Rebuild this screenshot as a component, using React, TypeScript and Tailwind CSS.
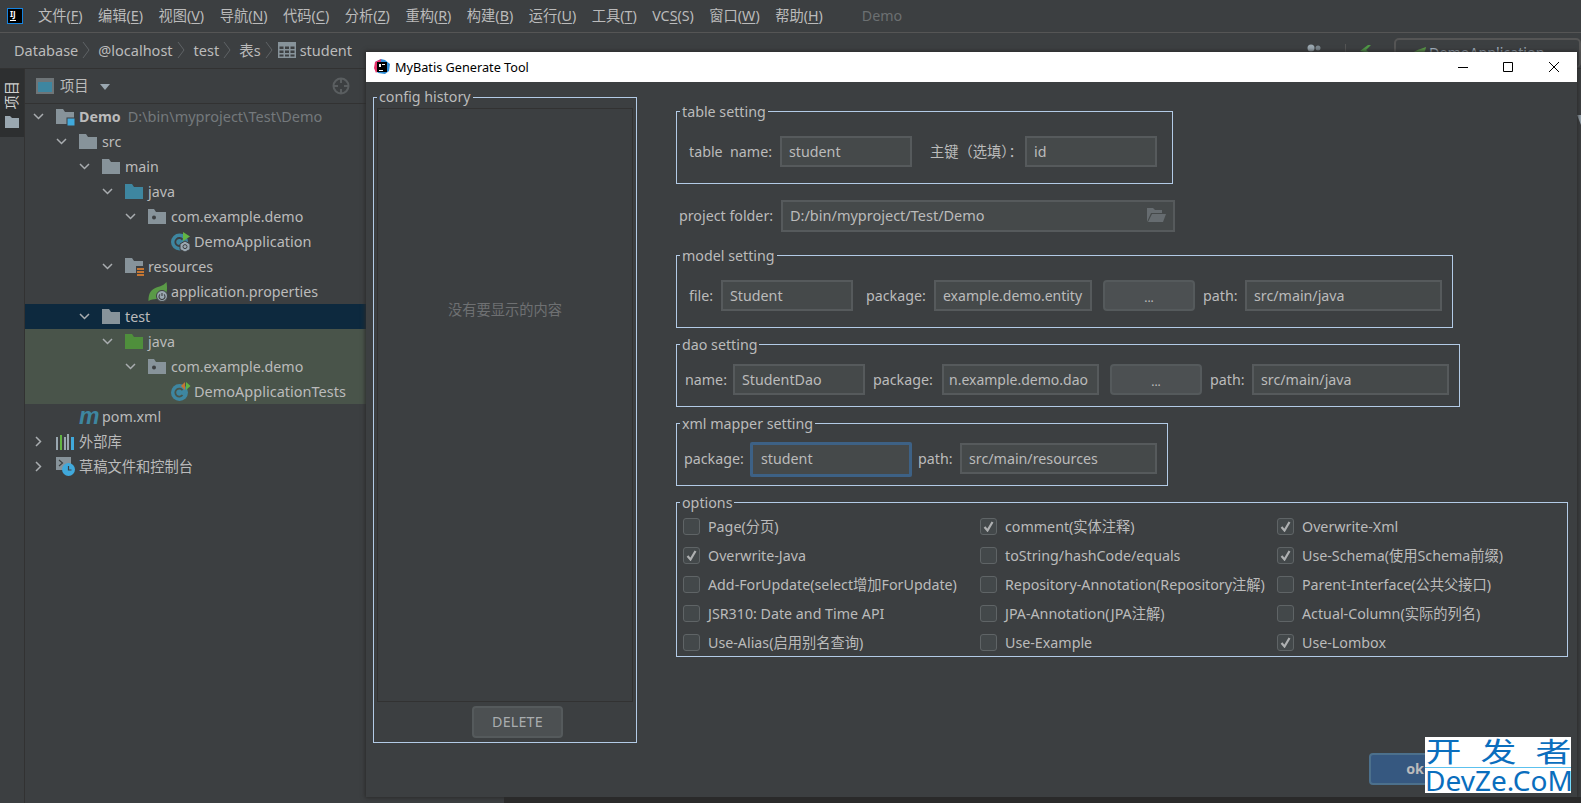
import type { ReactNode } from "react";

const Chevron = () => (
  <svg width="8" height="18" viewBox="0 0 8 18" fill="none" stroke="#5f6366" className="shrink-0">
    <path d="M1 1l6 8-6 8" />
  </svg>
);

const Arrow = ({ open }: { open: boolean }) => (
  <svg width="11" height="11" viewBox="0 0 11 11" fill="none" stroke="#a9adb0" strokeWidth="1.5">
    {open ? <path d="M1 3l4.5 4.5L10 3" /> : <path d="M3 1l4.5 4.5L3 10" />}
  </svg>
);

const Folder = ({ color = "#87939a" }: { color?: string }) => (
  <svg width="18" height="15" viewBox="0 0 18 15" fill={color}>
    <path d="M0 0h7l2 3h9v12H0z" />
  </svg>
);

const ModuleFolder = () => (
  <svg width="20" height="18" viewBox="0 0 20 18">
    <path d="M0 1h7l2 3h9v12H0z" fill="#87939a" />
    <rect x="11" y="10" width="8" height="8" fill="#40a9dc" stroke="#3c3f41" />
  </svg>
);

const PackageFolder = () => (
  <svg width="18" height="15" viewBox="0 0 18 15">
    <path d="M0 0h6l2 3h10v12H0z" fill="#87939a" />
    <circle cx="6" cy="8.5" r="2" fill="#3c3f41" />
  </svg>
);

const ResourcesFolder = () => (
  <svg width="20" height="18" viewBox="0 0 20 18">
    <path d="M0 0h7l2 3h9v12H0z" fill="#87939a" />
    <rect x="11" y="8" width="9" height="10" fill="#3c3f41" />
    <path d="M12 10h7v2h-7zM12 13h7v2h-7zM12 16h7v2h-7z" fill="#c57633" />
  </svg>
);

const MainClass = () => (
  <svg width="20" height="20" viewBox="0 0 20 20">
    <circle cx="8.5" cy="10" r="8.5" fill="#3e86a0" />
    <path d="M11.5 7.6a4 4 0 1 0 0 4.8" fill="none" stroke="#3c3f41" strokeWidth="1.8" />
    <path d="M12 0l7 4.5-7 4.5z" fill="#62b543" />
    <path d="M14 9l5 3v5.500l-5 2.500-5-2.500V12z" fill="#9aa7b0" stroke="#3c3f41" />
    <circle cx="14" cy="14.6" r="2" fill="none" stroke="#3c3f41" />
  </svg>
);

const TestClass = () => (
  <svg width="20" height="20" viewBox="0 0 20 20">
    <circle cx="8.5" cy="10.5" r="8.5" fill="#3e86a0" />
    <path d="M11.5 8.2a4 4 0 1 0 0 4.8" fill="none" stroke="#49544a" strokeWidth="1.8" />
    <path d="M14 0v8l-4-4z" fill="#c57633" />
    <path d="M15 0l4.500 4-4.500 4z" fill="#62b543" />
  </svg>
);

const SpringLeaf = () => (
  <svg width="21" height="20" viewBox="0 0 20 20">
    <path d="M0 19c0-3 0-9 5-12 5-3 9-2 13-7 1 6 1 12-3 15-4 3-10 1-15 4z" fill="#5a9a47" />
    <circle cx="13.500" cy="14" r="5.500" fill="#9aa7b0" stroke="#3c3f41" />
    <path d="M13.500 11v3M11.500 12.400a3 3 0 1 0 4 0" fill="none" stroke="#3c3f41" strokeWidth="1.100" />
  </svg>
);

const Libraries = () => (
  <svg width="18" height="16" viewBox="0 0 18 16">
    <path d="M0 3h2v13H0zM8 3h2v13H8z" fill="#9aa7b0" />
    <path d="M4 1h2v15H4z" fill="#62b543" />
    <path d="M11 0h2v16h-2z" fill="#9aa7b0" />
    <path d="M15 3h3v13h-3z" fill="#40a9dc" />
  </svg>
);

const Scratches = () => (
  <svg width="19" height="19" viewBox="0 0 19 19">
    <path d="M0 0h15v13H0z" fill="#87939a" />
    <path d="M3 3l3.500 3L3 9" fill="none" stroke="#3c3f41" strokeWidth="1.200" />
    <circle cx="12.500" cy="12.500" r="6.500" fill="#40a9dc" />
    <path d="M12.500 9v4h3" fill="none" stroke="#3c3f41" strokeWidth="1.200" />
  </svg>
);

const TableIcon = () => (
  <svg width="18" height="16" viewBox="0 0 18 16" className="shrink-0">
    <path d="M0 0h18v16H0z" fill="#87939a" />
    <path
      d="M1.500 4.500h4v2.500h-4zM7 4.500h4v2.500H7zM12.500 4.500h4v2.500h-4zM1.500 8.500h4V11h-4zM7 8.500h4V11H7zM12.500 8.500h4V11h-4zM1.500 12.500h4v2h-4zM7 12.500h4v2H7zM12.500 12.500h4v2h-4z"
      fill="#3c3f41"
    />
  </svg>
);

const menus: [string, string][] = [
  ["文件", "F"],
  ["编辑", "E"],
  ["视图", "V"],
  ["导航", "N"],
  ["代码", "C"],
  ["分析", "Z"],
  ["重构", "R"],
  ["构建", "B"],
  ["运行", "U"],
  ["工具", "T"],
];

const MenuBar = () => (
  <div className="flex items-center h-[33px] border-b border-[#555555] shrink-0">
    <div className="ml-[7px] w-[16px] h-[16px] border border-[#1583e0] bg-black flex flex-col items-start pl-[2px] pt-px">
      <span className="text-[8px] leading-[8px] font-bold text-white">IJ</span>
      <span className="w-[6px] h-px bg-white mt-[2px]" />
    </div>
    <div className="flex items-center gap-[15.5px] ml-[15px]">
      {menus.map(([name, key]) => (
        <span key={key}>
          {name}(<span className="underline underline-offset-2">{key}</span>)
        </span>
      ))}
      <span>
        VC<span className="underline underline-offset-2">S</span>(S)
      </span>
      <span>
        窗口(<span className="underline underline-offset-2">W</span>)
      </span>
      <span>
        帮助(<span className="underline underline-offset-2">H</span>)
      </span>
    </div>
    <span className="ml-[39px] text-[#6c7072]">Demo</span>
  </div>
);

const BreadcrumbBar = () => (
  <div className="flex items-center h-[36px] border-b border-[#323232] shrink-0">
    <div className="flex items-center pl-[14px] pb-[2px] gap-[4px] text-[14.5px]">
      <span>Database</span>
      <Chevron />
      <span className="ml-[4px]">@localhost</span>
      <Chevron />
      <span className="ml-[5px]">test</span>
      <Chevron />
      <span className="ml-[4px]">表s</span>
      <Chevron />
      <span className="flex ml-[1px]">
        <TableIcon />
      </span>
      <span>student</span>
    </div>
    <div className="ml-auto flex items-center self-stretch pt-[4px]">
      <svg width="16" height="14" viewBox="0 0 16 14" className="mr-[7px] mb-[4px]">
        <circle cx="5" cy="4" r="3.500" fill="#9aa7b0" />
        <path d="M0 14c0-4 2-5 5-5s5 1 5 5z" fill="#9aa7b0" />
        <circle cx="12" cy="4" r="2.500" fill="#7a858c" />
      </svg>
      <span className="w-[6px] h-px bg-[#9aa7b0] mr-[10px] mt-[16px]" />
      <span className="w-px h-[18px] bg-[#555555] mr-[14px]" />
      <svg width="14" height="12" viewBox="0 0 14 12" className="mr-[20px] mb-[4px]">
        <path d="M0 6l8-6h3L6 5l8 6h-4L4 7z" fill="#4f9a45" />
      </svg>
      <div className="flex items-center gap-[3px] w-[187px] h-[30px] mt-[1px] border-2 border-[#555555] rounded-[5px] pl-[12px]">
        <svg width="18" height="12" viewBox="0 0 18 12">
          <path d="M0 12c0-5 6-8 18-12-1 6-4 10-9 12z" fill="#5a9a47" />
        </svg>
        <span className="text-[#a9b7c6]">DemoApplication</span>
      </div>
    </div>
  </div>
);

type NodeRow = {
  depth: number;
  arrow?: "open" | "closed";
  icon: ReactNode;
  label: ReactNode;
  bg?: string;
};

const rows: NodeRow[] = [
  {
    depth: 0,
    arrow: "open",
    icon: <ModuleFolder />,
    label: (
      <>
        <b className="font-bold">Demo</b>
        <span className="ml-[7px] text-[#74797c] text-[14.5px]">D:\bin\myproject\Test\Demo</span>
      </>
    ),
  },
  { depth: 1, arrow: "open", icon: <Folder />, label: "src" },
  { depth: 2, arrow: "open", icon: <Folder />, label: "main" },
  { depth: 3, arrow: "open", icon: <Folder color="#3e86a0" />, label: "java" },
  { depth: 4, arrow: "open", icon: <PackageFolder />, label: "com.example.demo" },
  { depth: 5, icon: <MainClass />, label: <span className="text-[14.5px]">DemoApplication</span> },
  { depth: 3, arrow: "open", icon: <ResourcesFolder />, label: "resources" },
  { depth: 4, icon: <SpringLeaf />, label: "application.properties" },
  { depth: 2, arrow: "open", icon: <Folder />, label: "test", bg: "bg-[#0d293e]" },
  { depth: 3, arrow: "open", icon: <Folder color="#4f8f3c" />, label: "java", bg: "bg-[#49544a]" },
  { depth: 4, arrow: "open", icon: <PackageFolder />, label: "com.example.demo", bg: "bg-[#49544a]" },
  { depth: 5, icon: <TestClass />, label: <span className="text-[14.5px]">DemoApplicationTests</span>, bg: "bg-[#49544a]" },
  {
    depth: 1,
    icon: <span className="text-[23px] leading-none font-bold italic text-[#3e86a0] font-['Liberation_Sans',sans-serif]">m</span>,
    label: "pom.xml",
  },
  { depth: 0, arrow: "closed", icon: <Libraries />, label: "外部库" },
  { depth: 0, arrow: "closed", icon: <Scratches />, label: "草稿文件和控制台" },
];

const Sidebar = () => (
  <div className="w-[479px] shrink-0">
    <div className="flex items-center h-[35px] border-b border-[#323232] pl-[11px]">
      <svg width="18" height="16" viewBox="0 0 18 16" className="mr-[6px]">
        <path d="M0 0h18v16H0z" fill="#6e7578" />
        <path d="M2 4h14v10H2z" fill="#3e86a0" />
      </svg>
      <span>项目</span>
      <svg width="10" height="6" viewBox="0 0 10 6" className="ml-[11px] mt-px">
        <path d="M0 0h10L5 6z" fill="#9aa7b0" />
      </svg>
      <svg width="18" height="18" viewBox="0 0 18 18" className="ml-auto mr-[154px]" fill="none" stroke="#5a5e60" strokeWidth="2">
        <circle cx="9" cy="9" r="7.500" />
        <path d="M9 1v5M9 12v5M1 9h5M12 9h5" />
      </svg>
    </div>
    {rows.map((row, i) => (
      <div
        key={i}
        className={`flex items-center h-[25px] whitespace-nowrap ${row.bg ?? ""}`}
        style={{ paddingLeft: 8 + 23 * row.depth }}
      >
        <span className="w-[23px] flex justify-start shrink-0">
          {row.arrow && <Arrow open={row.arrow === "open"} />}
        </span>
        <span className="w-[23px] flex items-center shrink-0">{row.icon}</span>
        <span>{row.label}</span>
      </div>
    ))}
  </div>
);

const Legend = ({ className = "-top-[10px]", children }: { className?: string; children: ReactNode }) => (
  <span className={`absolute left-[3px] px-[2px] leading-[20px] bg-[#3c3f41] ${className}`}>{children}</span>
);

const TextBox = ({ className, children }: { className: string; children: ReactNode }) => (
  <div className={`flex items-center justify-between h-[31px] shrink-0 overflow-hidden whitespace-nowrap pl-[7px] pr-[7px] bg-[#45494a] border-2 border-[#565a5c] ${className}`}>
    {children}
  </div>
);

const Btn = ({ className, children }: { className: string; children: ReactNode }) => (
  <div className={`flex items-center justify-center shrink-0 rounded-[4px] bg-[#4c5052] border-2 border-[#555a5c] ${className}`}>
    {children}
  </div>
);

const CheckBox = ({ label, checked }: { label: string; checked?: boolean }) => (
  <div className="flex items-center gap-[8px] h-[17px] whitespace-nowrap">
    <span className="flex items-center justify-center w-[17px] h-[17px] shrink-0 rounded-[3px] bg-[#43484a] border border-[#5f6466]">
      {checked && (
        <svg width="11" height="11" viewBox="0 0 11 11" fill="none" stroke="#aeb0b1" strokeWidth="2.2">
          <path d="M1.500 6l3 3.500L9.500 1" />
        </svg>
      )}
    </span>
    <span>{label}</span>
  </div>
);

const options: [string, boolean][] = [
  ["Page(分页)", false],
  ["comment(实体注释)", true],
  ["Overwrite-Xml", true],
  ["Overwrite-Java", true],
  ["toString/hashCode/equals", false],
  ["Use-Schema(使用Schema前缀)", true],
  ["Add-ForUpdate(select增加ForUpdate)", false],
  ["Repository-Annotation(Repository注解)", false],
  ["Parent-Interface(公共父接口)", false],
  ["JSR310: Date and Time API", false],
  ["JPA-Annotation(JPA注解)", false],
  ["Actual-Column(实际的列名)", false],
  ["Use-Alias(启用别名查询)", false],
  ["Use-Example", false],
  ["Use-Lombox", true],
];

const groupBorder = "relative shrink-0 border border-[#b3cbe6]";

const Settings = () => (
  <div className="flex flex-col ml-[39px] mt-[29px]">
    <div className={`${groupBorder} w-[497px] h-[73px] flex items-start pt-[24px] pl-[12px]`}>
      <Legend>table setting</Legend>
      <span className="w-[91px] h-[31px] leading-[31px] whitespace-pre">table  name:</span>
      <TextBox className="w-[132px]">student</TextBox>
      <span className="ml-[18px] w-[95px] h-[31px] leading-[31px] whitespace-nowrap">主键（选填）：</span>
      <TextBox className="w-[132px]">id</TextBox>
    </div>

    <div className="flex items-center mt-[16px] ml-[3px]">
      <span className="w-[102px]">project folder:</span>
      <TextBox className="w-[394px] !h-[32px] pb-[2px] text-[14.5px]">
        D:/bin/myproject/Test/Demo
        <svg width="19" height="14" viewBox="0 0 19 14" className="shrink-0">
          <path d="M0 14V0h6l2 2h7v3H4z" fill="#666c70" />
          <path d="M5 6h14l-3 8H1z" fill="#666c70" />
        </svg>
      </TextBox>
    </div>

    <div className={`${groupBorder} w-[777px] h-[73px] mt-[23px] flex items-start pt-[24px] pl-[12px]`}>
      <Legend>model setting</Legend>
      <span className="w-[32px] leading-[31px]">file:</span>
      <TextBox className="w-[132px]">Student</TextBox>
      <span className="ml-[13px] w-[68px] leading-[31px]">package:</span>
      <TextBox className="w-[158px] text-[14px]">example.demo.entity</TextBox>
      <Btn className="ml-[11px] w-[92px] h-[31px] text-[12px] pt-[5px]">...</Btn>
      <span className="ml-[8px] w-[42px] leading-[31px]">path:</span>
      <TextBox className="w-[197px]">src/main/java</TextBox>
    </div>

    <div className={`${groupBorder} w-[784px] h-[63px] mt-[16px] flex items-start pt-[19px] pl-[8px]`}>
      <Legend>dao setting</Legend>
      <span className="w-[48px] leading-[31px]">name:</span>
      <TextBox className="w-[132px]">StudentDao</TextBox>
      <span className="ml-[8px] w-[69px] leading-[31px]">package:</span>
      <TextBox className="w-[157px] !pl-[5px] text-[14px]">n.example.demo.dao</TextBox>
      <Btn className="ml-[11px] w-[92px] h-[31px] text-[12px] pt-[5px]">...</Btn>
      <span className="ml-[8px] w-[42px] leading-[31px]">path:</span>
      <TextBox className="w-[197px]">src/main/java</TextBox>
    </div>

    <div className={`${groupBorder} w-[492px] h-[63px] mt-[16px] flex items-start pt-[19px] pl-[7px]`}>
      <Legend>xml mapper setting</Legend>
      <span className="w-[66px] leading-[31px]">package:</span>
      <div className="flex items-center w-[162px] h-[35px] -mt-[1px] -mb-[3px] pl-[8px] pb-[2px] bg-[#45494a] border-[3px] border-[#3d6185] rounded-[2px]">
        student
      </div>
      <span className="ml-[6px] w-[42px] leading-[31px]">path:</span>
      <TextBox className="w-[197px]">src/main/resources</TextBox>
    </div>

    <div className={`${groupBorder} w-[892px] h-[155px] mt-[16px] pt-[15px] pl-[6px] grid grid-cols-[297px_297px_1fr] gap-y-[12px] content-start`}>
      <Legend>options</Legend>
      {options.map(([label, checked]) => (
        <CheckBox key={label} label={label} checked={checked} />
      ))}
    </div>
  </div>
);

const Dialog = () => (
  <div className="absolute left-[366px] top-[52px] w-[1211px] h-[745px] flex flex-col bg-[#3c3f41] shadow-[0_0_4px_1px_#2b2b2b]">
    <div className="flex items-center h-[30px] shrink-0 bg-white text-black text-[12.7px] pl-[8px]">
      <svg width="16" height="16" viewBox="0 0 16 16" className="shrink-0">
        <path d="M1 3l6-3 4 1 5 4-1 7-4 3-7-1-3-4z" fill="#2f8fd8" />
        <path d="M1 3l6-3-1 8-4 6-2-5z" fill="#e8336a" />
        <rect x="3" y="3" width="10" height="10" fill="#000" />
        <path d="M5 5h2v3H5zM8 5h3v1H8zM5 11h4v1H5z" fill="#fff" />
      </svg>
      <span className="ml-[5px]">MyBatis Generate Tool</span>
      <div className="ml-auto flex items-center">
        <svg width="10" height="10" viewBox="0 0 10 10" stroke="#000" className="mr-[35px]">
          <path d="M0 5.500h10" />
        </svg>
        <svg width="10" height="10" viewBox="0 0 10 10" fill="none" stroke="#000" className="mr-[36px]">
          <path d="M.5.500h9v9h-9z" />
        </svg>
        <svg width="10" height="10" viewBox="0 0 10 10" stroke="#000" className="mr-[18px]">
          <path d="M0 0l10 10M10 0L0 10" />
        </svg>
      </div>
    </div>
    <div className="relative flex items-start">
      <div className="relative shrink-0 flex flex-col ml-[7px] mt-[15px] w-[264px] h-[646px] border border-[#b3cbe6] px-[3px] pt-[10px]">
        <Legend className="-top-[11px]">config history</Legend>
        <div className="flex items-center justify-center h-[594px] pb-[190px] border border-[#323232] text-[#6e7072]">
          没有要显示的内容
        </div>
        <Btn className="self-start ml-[95px] mt-[4px] w-[91px] h-[32px] tracking-[0.2px] text-[#a9adaf]">DELETE</Btn>
      </div>
      <Settings />
      <Btn className="absolute left-[1003px] top-[671px] w-[92px] h-[32px] !bg-[#365880] !border-[#4c708c] font-bold">ok</Btn>
    </div>
  </div>
);

const Watermark = () => (
  <div className="absolute left-[1425px] top-[737px] w-[146px] h-[56px] flex flex-col bg-white text-[#0a6ebd]">
    <div className="flex justify-between h-[31px] px-[4.5px] text-[27px] leading-[30px] border-b border-[#5cc1ee]">
      <span className="scale-x-[1.33]">开</span>
      <span className="scale-x-[1.33]">发</span>
      <span className="scale-x-[1.33]">者</span>
    </div>
    <div className="text-center text-[28px] leading-[25px] whitespace-nowrap">DevZe.CoM</div>
  </div>
);

export default function App() {
  return (
    <div className="relative flex flex-col h-[803px] overflow-hidden bg-[#3c3f41] text-[#bbbbbb] text-[14.25px] leading-[20px] font-['Noto_Sans','Noto_Sans_CJK_SC',sans-serif]">
      <MenuBar />
      <BreadcrumbBar />
      <div className="flex flex-1 min-h-0">
        <div className="w-[25px] shrink-0 border-r border-[#323232]">
          <div className="flex flex-col items-center h-[68px] bg-[#2d2f30] pt-[12px]">
            <span className="[writing-mode:vertical-rl] [text-orientation:sideways] rotate-180 text-[#cfcfcf] leading-[14px]">项目</span>
            <svg width="14" height="12" viewBox="0 0 14 12" fill="#9aa7b0" className="mt-[6px]">
              <path d="M0 0h5l2 2h7v10H0z" />
            </svg>
          </div>
        </div>
        <Sidebar />
        <div className="flex-1 flex justify-end bg-[#2b2b2b]">
          <div className="w-[4px] h-[728px] pt-[46px] bg-[#3c3f41]">
            <svg width="4" height="10" viewBox="0 0 4 10" fill="#9aa7b0" className="block">
              <path d="M0 0h4v10z" />
            </svg>
          </div>
        </div>
      </div>
      <Dialog />
      <Watermark />
    </div>
  );
}
